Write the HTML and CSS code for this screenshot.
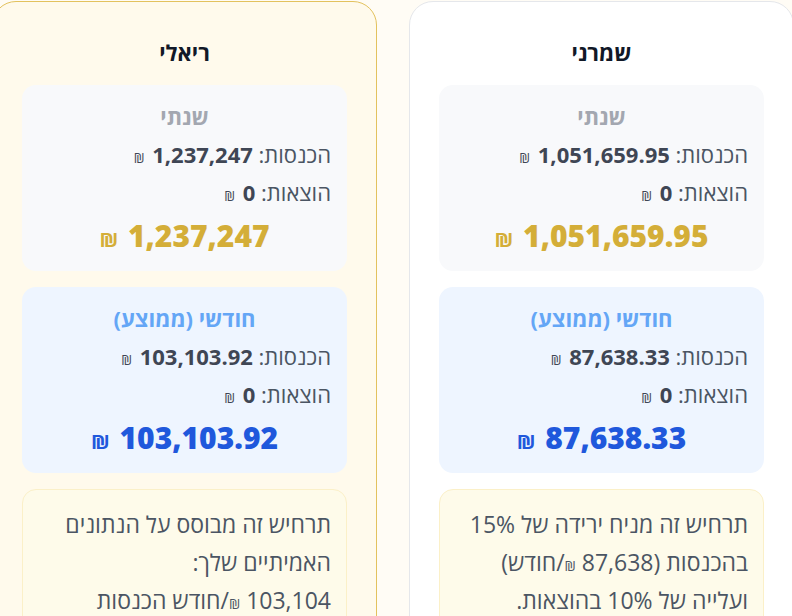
FILE: index.html
```html
<!DOCTYPE html>
<html lang="he" dir="rtl">
<head>
    <meta charset="UTF-8">
    <meta name="viewport" content="width=device-width, initial-scale=1.0">
    <title>תרחישים</title>
    <link rel="stylesheet" href="styles.css">
</head>
<body>
    <div class="scenarios">
        <!-- conservative scenario -->
        <div class="scenario">
            <h2 class="scenario-title">שמרני</h2>
            <div class="period yearly">
                <div class="period-title">שנתי</div>
                <div class="row">הכנסות: <b>1,051,659.95 <span class="nis">₪</span></b></div>
                <div class="row">הוצאות: <b>0 <span class="nis">₪</span></b></div>
                <div class="total">1,051,659.95 <span class="nis">₪</span></div>
            </div>
            <div class="period monthly">
                <div class="period-title">חודשי (ממוצע)</div>
                <div class="row">הכנסות: <b>87,638.33 <span class="nis">₪</span></b></div>
                <div class="row">הוצאות: <b>0 <span class="nis">₪</span></b></div>
                <div class="total">87,638.33 <span class="nis">₪</span></div>
            </div>
            <div class="note">
                תרחיש זה מניח ירידה של 15% בהכנסות (87,638 <span class="nis">₪</span>/חודש) ועלייה של 10% בהוצאות.
            </div>
        </div>

        <!-- realistic scenario -->
        <div class="scenario realistic">
            <h2 class="scenario-title">ריאלי</h2>
            <div class="period yearly">
                <div class="period-title">שנתי</div>
                <div class="row">הכנסות: <b>1,237,247 <span class="nis">₪</span></b></div>
                <div class="row">הוצאות: <b>0 <span class="nis">₪</span></b></div>
                <div class="total">1,237,247 <span class="nis">₪</span></div>
            </div>
            <div class="period monthly">
                <div class="period-title">חודשי (ממוצע)</div>
                <div class="row">הכנסות: <b>103,103.92 <span class="nis">₪</span></b></div>
                <div class="row">הוצאות: <b>0 <span class="nis">₪</span></b></div>
                <div class="total">103,103.92 <span class="nis">₪</span></div>
            </div>
            <div class="note">
                תרחיש זה מבוסס על הנתונים האמיתיים שלך:<br>
                103,104 <span class="nis">₪</span>/חודש הכנסות<br>
                0 <span class="nis">₪</span>/חודש הוצאות
            </div>
        </div>
    </div>
</body>
</html>
```
FILE: styles.css
```css
html, body {
    overflow: hidden;
}
body {
    margin: 0;
    font-family: "Open Sans", "DejaVu Sans", sans-serif;
    background-color: #fffcf5;
    color: #4b5563;
}
.scenarios {
    display: grid;
    grid-template-columns: repeat(2, 385px);
    gap: 32px;
    width: 802px;
    margin-right: -2px;
    padding-top: 1px;
}
.scenario {
    background-color: #fff;
    border: 1px solid #e5e7eb;
    border-radius: 24px;
    padding: 35px 29px 24px;
}
.scenario.realistic {
    background-color: #fffaec;
    border-color: #e3c25e;
}
.scenario-title {
    margin: 0 0 18px;
    font-size: 22px;
    line-height: 30px;
    font-weight: 700;
    color: #111827;
    text-align: center;
}
.period {
    border-radius: 14px;
    padding: 16px 16px 15px;
    margin-bottom: 16px;
}
.period.yearly {
    background-color: #f8f9fb;
}
.period.monthly {
    background-color: #eef5ff;
}
.period-title {
    font-size: 22px;
    line-height: 30px;
    font-weight: 700;
    text-align: center;
    margin-bottom: 4px;
}
.yearly .period-title {
    color: #a3a7b0;
}
.monthly .period-title {
    color: #64a6f6;
}
.row {
    font-size: 22px;
    line-height: 38px;
}
.row b {
    color: #3f4654;
}
.nis {
    font-size: 0.62em;
    font-weight: 400;
    line-height: 1;
    margin-right: 2px;
}
.total {
    font-size: 30px;
    line-height: 40px;
    font-weight: 800;
    text-align: center;
    margin-top: 5px;
}
.total .nis {
    font-size: 0.68em;
    font-weight: 700;
}
.yearly .total {
    color: #d4ae38;
}
.monthly .total {
    color: #1f58dc;
}
.note {
    background-color: #fefbea;
    border: 1px solid #fbf0c8;
    border-radius: 14px;
    padding: 15px 15px 15px 16px;
    font-size: 23px;
    line-height: 38px;
}
.note .nis {
    margin-right: 0;
}
```
